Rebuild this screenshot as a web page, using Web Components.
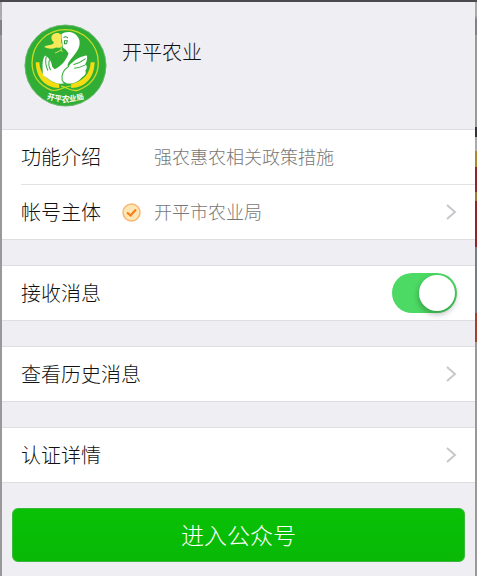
<!DOCTYPE html>
<html lang="zh-CN">
<head>
<meta charset="utf-8">
<meta name="viewport" content="width=device-width, initial-scale=1">
<title>开平农业</title>
<style>
  body {
    margin: 0;
    font-family: "Noto Sans CJK SC", sans-serif;
    font-size: 20px;
    font-weight: 300;
    line-height: 30px;
    color: #111;
    background: #efeef3;
  }
</style>
</head>
<body>

<account-page>
  <account-header>
    <account-logo slot="logo"></account-logo>
    开平农业
  </account-header>

  <cell-group>
    <info-cell label="功能介绍">强农惠农相关政策措施</info-cell>
    <info-cell label="帐号主体" arrow>
      <verified-badge slot="badge"></verified-badge>
      开平市农业局
    </info-cell>
  </cell-group>

  <cell-group>
    <switch-cell label="接收消息" checked></switch-cell>
  </cell-group>

  <cell-group>
    <info-cell label="查看历史消息" arrow></info-cell>
  </cell-group>

  <cell-group>
    <info-cell label="认证详情" arrow></info-cell>
  </cell-group>

  <primary-button>进入公众号</primary-button>
</account-page>

<script>
// Crea el shadow root y mete el contenido
function pintar(el, html) {
  el.attachShadow({ mode: 'open' }).innerHTML = html;
}

// Hoja principal, con el borde de la página de fondo a los lados
class AccountPage extends HTMLElement {
  constructor() {
    super();
    pintar(this, `<style>
      :host {
        display: block;
        box-sizing: border-box;
        min-height: 100vh;
        padding: 2px 2px 14px;
        background:
          linear-gradient(#4b4a4f, #4b4a4f) top / 100% 2px no-repeat,
          linear-gradient(#aaa 0 15px, #aeadb2 15px 20px, #828187 20px 35px, #999 35px) left / 2px 100% no-repeat,
          linear-gradient(#aaa 15px, #828187 20px 35px, #999 35px 127px, #333 127px 137px, #aaa 137px 151px,
            #a98a2c 151px 167px, #8e2528 167px 192px, #9b7b38 192px 201px, #8e2528 201px 247px,
            #777d82 247px 313px, #a04030 313px 342px, #999 342px) right / 2px 100% no-repeat,
          #efeef3;
      }
    </style>
    <main><slot></slot></main>`);
  }
}

class AccountHeader extends HTMLElement {
  constructor() {
    super();
    pintar(this, `<style>
      :host {
        display: flex;
        align-items: flex-start;
        gap: 15px;
        padding: 22px 20px 22px 22px;
      }
      h1 {
        margin: 0;
        padding-top: 13px;
        font-size: 20px;
        font-weight: inherit;
        line-height: 30px;
      }
    </style>
    <slot name="logo"></slot>
    <h1><slot></slot></h1>`);
  }
}

class AccountLogo extends HTMLElement {
  constructor() {
    super();
    pintar(this, `<style>
      :host { display: block; width: 83px; height: 83px; }
      svg { display: block; width: 100%; height: 100%; }
      text { font-family: "Noto Sans CJK SC", sans-serif; font-size: 23px; font-weight: 700; fill: #fff; }
    </style>
    <svg viewBox="20 18 248 248" role="img" aria-label="开平农业局">
      <circle cx="144" cy="142" r="122" fill="#2fad35"/>
      <circle cx="144" cy="142" r="121" fill="none" stroke="#87bd8b" stroke-width="2"/>
      <!-- anillo y espigas -->
      <path d="M103 216 C65 202 44 172 44 134 A99 99 0 0 1 242 134 C242 172 220 203 180 216 C158 220 151 207 131 204"
        fill="none" stroke="#c8dc24" stroke-width="4"/>
      <path d="M103 216 C128 220 139 203 162 203" fill="none" stroke="#c8dc24" stroke-width="3"/>
      <path d="M55 132 L66 132 C67 164 86 188 125 197 L125 209 C82 208 56 178 55 132 Z" fill="#f5dc12"/>
      <path d="M219 132 L231 132 C230 178 204 208 161 209 L161 197 C198 188 218 165 219 132 Z" fill="#f5dc12"/>
      <!-- cisne -->
      <path d="M77 171 C75 149 73 124 83 112 C95 119 103 130 104 145 L111 153
        C133 144 147 124 153 106 C149 98 143 92 136 88 L132 48
        C146 37 173 40 183 60 C194 83 176 105 160 123
        C150 135 148 143 153 145 C169 124 192 113 208 112
        C210 123 207 132 202 139 C209 141 210 149 203 158
        C208 164 201 174 191 179 C181 193 158 199 143 194
        C131 200 107 194 94 183 Z" fill="#fff"/>
      <path d="M153 145 C139 154 130 170 134 186 Q137 194 145 195
        M169 139 Q187 134 203 122 M171 150 Q188 148 202 141
        M86 116 Q82 137 91 156 M96 125 Q91 140 99 155"
        fill="none" stroke="#2fad35" stroke-width="3" stroke-linecap="round"/>
      <path d="M102 56 C104 45 123 40 131 50 C136 61 127 70 134 78
        C137 88 127 91 116 88 Q100 96 80 87 C87 79 100 83 107 77 Q112 73 104 67 Q101 62 102 56 Z" fill="#f5e957"/>
      <path d="M133 88 L129 97 L113 105 M130 95 L135 101"
        fill="none" stroke="#d3e35a" stroke-width="3"/>
      <path d="M138 59 Q145 53 151 60 M140 68 H151 M141 68 V77 Q149 79 149 68"
        fill="none" stroke="#27963a" stroke-width="3"/>
      <path id="arco" d="M65 232 Q144 268 223 232" fill="none"/>
      <text text-anchor="middle"><textPath href="#arco" startOffset="50%">开平农业局</textPath></text>
    </svg>`);
  }
}

class CellGroup extends HTMLElement {
  constructor() {
    super();
    pintar(this, `<style>
      :host {
        display: block;
        margin-bottom: 25px;
        background: #fff;
        border-top: 1px solid #dedde1;
        border-bottom: 1px solid #dedde1;
      }
    </style>
    <slot></slot>`);
  }
}

// Fila con etiqueta, insignia opcional, valor y flecha
class InfoCell extends HTMLElement {
  constructor() {
    super();
    const etiqueta = this.getAttribute('label');
    const flecha = this.hasAttribute('arrow');
    const tag = flecha ? 'a' : 'div';
    pintar(this, `<style>
      :host { display: block; padding-left: 19px; }
      .fila {
        display: flex;
        align-items: center;
        min-height: 54px;
        padding-right: 18px;
        color: inherit;
        text-decoration: none;
      }
      :host(:not(:first-child)) .fila { border-top: 1px solid #e2e2e4; }
      .etiqueta { min-width: 101px; }
      .insignia { width: 32px; }
      .valor { flex: 1; padding-bottom: 2px; font-size: 18px; line-height: 26px; color: #777; }
      svg { width: 12px; height: 18px; }
    </style>
    <${tag} class="fila" ${flecha ? 'href="#"' : ''}>
      <span class="etiqueta">${etiqueta}</span>
      <span class="insignia"><slot name="badge"></slot></span>
      <span class="valor"><slot></slot></span>
      ${flecha ? `<svg viewBox="0 0 12 18" aria-hidden="true">
        <path d="M2 2 L10 9 L2 16" fill="none" stroke="#c7c7cc" stroke-width="2"/>
      </svg>` : ''}
    </${tag}>`);
  }
}

class VerifiedBadge extends HTMLElement {
  constructor() {
    super();
    pintar(this, `<style>
      :host { display: block; width: 19px; height: 19px; }
      svg { display: block; }
    </style>
    <svg width="19" height="19" viewBox="0 0 38 38" role="img" aria-label="已认证">
      <circle cx="19" cy="19" r="17" fill="#ffe6b5" stroke="#f9b673" stroke-width="3"/>
      <path d="M10 19 L17 25 L28 13" fill="none" stroke="#fb7b15" stroke-width="4"/>
    </svg>`);
  }
}

class SwitchCell extends HTMLElement {
  constructor() {
    super();
    pintar(this, `<style>
      :host { display: block; }
      label {
        display: flex;
        align-items: center;
        justify-content: space-between;
        min-height: 54px;
        padding: 0 18px 0 19px;
      }
      input {
        appearance: none;
        display: flex;
        box-sizing: border-box;
        width: 65px;
        height: 40px;
        margin: 0;
        padding: 2px;
        border-radius: 20px;
        background: #e5e5ea;
      }
      input::before {
        content: "";
        width: 36px;
        height: 36px;
        border-radius: 50%;
        background: #fff;
        box-shadow: 0 3px 6px rgba(0, 0, 0, 0.3);
      }
      input:checked { background: #4cd964; justify-content: flex-end; }
    </style>
    <label>
      <span>${this.getAttribute('label')}</span>
      <input type="checkbox" role="switch" ${this.hasAttribute('checked') ? 'checked' : ''}>
    </label>`);
  }
}

class PrimaryButton extends HTMLElement {
  constructor() {
    super();
    pintar(this, `<style>
      :host { display: block; padding: 0 10px; }
      button {
        display: block;
        width: 100%;
        height: 54px;
        padding: 0 0 2px;
        border: 1px solid #3bb73b;
        border-radius: 6px;
        background: linear-gradient(#08c106, #08b906);
        color: #fff;
        font-family: inherit;
        font-size: 23px;
        font-weight: inherit;
      }
    </style>
    <button type="button"><slot></slot></button>`);
  }
}

customElements.define('account-page', AccountPage);
customElements.define('account-header', AccountHeader);
customElements.define('account-logo', AccountLogo);
customElements.define('cell-group', CellGroup);
customElements.define('info-cell', InfoCell);
customElements.define('verified-badge', VerifiedBadge);
customElements.define('switch-cell', SwitchCell);
customElements.define('primary-button', PrimaryButton);
</script>
</body>
</html>
